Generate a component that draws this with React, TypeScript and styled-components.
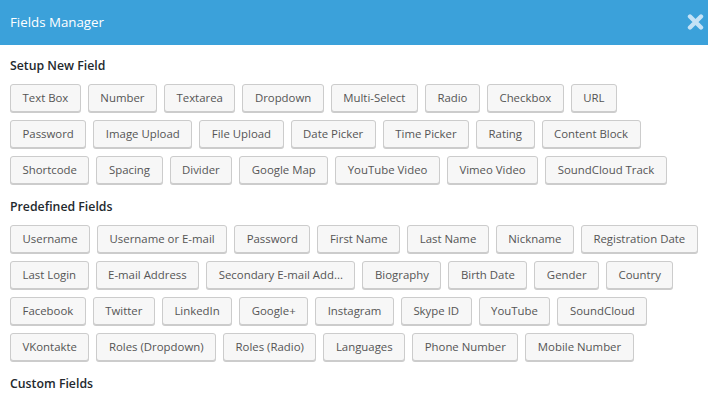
import React from 'react';
import styled, { createGlobalStyle } from 'styled-components';

const GlobalStyle = createGlobalStyle`
  html, body {
    margin: 0;
    padding: 0;
    background: #fff;
  }
  body {
    font-family: 'Open Sans', 'Noto Sans', sans-serif;
    color: #555;
  }
`;

const Modal = styled.div`
  width: 708px;
  height: 401px;
  overflow: hidden;
  background: #fff;
`;

const Header = styled.div`
  display: flex;
  align-items: center;
  justify-content: space-between;
  height: 45px;
  padding: 0 4px 0 10px;
  box-sizing: border-box;
  background: #3ba1da;
`;

const Title = styled.div`
  font-size: 13.3px;
  color: #fff;
  margin-top: -1px;
`;

const CloseButton = styled.button`
  display: flex;
  align-items: center;
  justify-content: center;
  width: 18px;
  height: 18px;
  padding: 0;
  margin-top: -2px;
  border: none;
  background: transparent;
  cursor: pointer;
`;

const Body = styled.div`
  padding: 11px 10px 0;
`;

const Section = styled.div`
  margin-bottom: 13px;
`;

const SectionTitle = styled.div`
  font-size: 12.3px;
  font-weight: 600;
  line-height: 20px;
  color: #23282d;
  margin-bottom: 8px;
`;

const ButtonList = styled.div`
  display: flex;
  flex-direction: column;
  gap: 8px;
`;

const ButtonRow = styled.div`
  display: flex;
  gap: 7px;
`;

const FieldButton = styled.button`
  height: 28px;
  padding: 0 11.5px;
  border: 1px solid #ccc;
  border-radius: 3px;
  background: #f7f7f7;
  box-shadow: 0 1px 0 #ccc;
  font-family: 'Open Sans', 'Noto Sans', sans-serif;
  font-size: 11.4px;
  line-height: 26px;
  color: #555;
  white-space: nowrap;
  cursor: pointer;
`;

const CloseIcon = () => (
  <svg width="17" height="16" viewBox="0 0 17 16">
    <path
      d="M3 2.5 L14 13.5 M14 2.5 L3 13.5"
      stroke="#c4e2f6"
      strokeWidth="4.4"
      strokeLinecap="round"
    />
  </svg>
);

const sections: { title: string; rows: string[][] }[] = [
  {
    title: 'Setup New Field',
    rows: [
      ['Text Box', 'Number', 'Textarea', 'Dropdown', 'Multi-Select', 'Radio', 'Checkbox', 'URL'],
      ['Password', 'Image Upload', 'File Upload', 'Date Picker', 'Time Picker', 'Rating', 'Content Block'],
      ['Shortcode', 'Spacing', 'Divider', 'Google Map', 'YouTube Video', 'Vimeo Video', 'SoundCloud Track'],
    ],
  },
  {
    title: 'Predefined Fields',
    rows: [
      ['Username', 'Username or E-mail', 'Password', 'First Name', 'Last Name', 'Nickname', 'Registration Date'],
      ['Last Login', 'E-mail Address', 'Secondary E-mail Add...', 'Biography', 'Birth Date', 'Gender', 'Country'],
      ['Facebook', 'Twitter', 'LinkedIn', 'Google+', 'Instagram', 'Skype ID', 'YouTube', 'SoundCloud'],
      ['VKontakte', 'Roles (Dropdown)', 'Roles (Radio)', 'Languages', 'Phone Number', 'Mobile Number'],
    ],
  },
  {
    title: 'Custom Fields',
    rows: [],
  },
];

export default function App() {
  return (
    <>
      <GlobalStyle />
      <Modal>
        <Header>
          <Title>Fields Manager</Title>
          <CloseButton aria-label="Close">
            <CloseIcon />
          </CloseButton>
        </Header>
        <Body>
          {sections.map((section) => (
            <Section key={section.title}>
              <SectionTitle>{section.title}</SectionTitle>
              {section.rows.length > 0 && (
                <ButtonList>
                  {section.rows.map((row, i) => (
                    <ButtonRow key={i}>
                      {row.map((field) => (
                        <FieldButton key={field}>{field}</FieldButton>
                      ))}
                    </ButtonRow>
                  ))}
                </ButtonList>
              )}
            </Section>
          ))}
        </Body>
      </Modal>
    </>
  );
}
